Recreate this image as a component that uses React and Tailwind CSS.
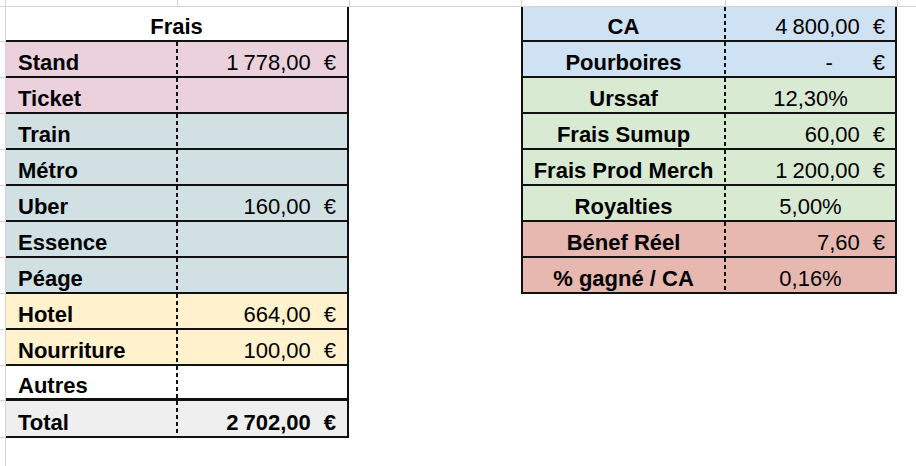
import React from 'react';

// Spreadsheet cost breakdown, two small tables side by side
const fees = [
  { label: 'Stand', value: '1 778,00', bg: 'bg-[#ead1dc]' },
  { label: 'Ticket', value: '', bg: 'bg-[#ead1dc]' },
  { label: 'Train', value: '', bg: 'bg-[#d0e0e3]' },
  { label: 'Métro', value: '', bg: 'bg-[#d0e0e3]' },
  { label: 'Uber', value: '160,00', bg: 'bg-[#d0e0e3]' },
  { label: 'Essence', value: '', bg: 'bg-[#d0e0e3]' },
  { label: 'Péage', value: '', bg: 'bg-[#d0e0e3]' },
  { label: 'Hotel', value: '664,00', bg: 'bg-[#fff2cc]' },
  { label: 'Nourriture', value: '100,00', bg: 'bg-[#fff2cc]' },
];

const summary = [
  { label: 'CA', value: '4 800,00', bg: 'bg-[#cfe2f3]', h: 'h-[35px]' },
  { label: 'Pourboires', value: '-', bg: 'bg-[#cfe2f3]' },
  { label: 'Urssaf', pct: '12,30%', bg: 'bg-[#d9ead3]' },
  { label: 'Frais Sumup', value: '60,00', bg: 'bg-[#d9ead3]' },
  { label: 'Frais Prod Merch', value: '1 200,00', bg: 'bg-[#d9ead3]' },
  { label: 'Royalties', pct: '5,00%', bg: 'bg-[#d9ead3]' },
  { label: 'Bénef Réel', value: '7,60', bg: 'bg-[#e6b8af]' },
  { label: '% gagné / CA', pct: '0,16%', bg: 'bg-[#e6b8af]' },
];

// number with thin gaps between thousands groups
function Num({ text }) {
  const parts = text.split(' ');
  return (
    <span className="flex">
      {parts.map((p, i) => (
        <span key={i} className={i > 0 ? 'ml-[5px]' : ''}>{p}</span>
      ))}
    </span>
  );
}

// accounting style amount: number then euro sign
function Amount({ value }) {
  if (!value) return null;
  return (
    <span className="flex items-end">
      <Num text={value} />
      {value === '-' && <span className="inline-block w-[27px]" />}
      <span className="ml-[13px]">€</span>
    </span>
  );
}

function Dashes() {
  return <div className="w-[2px] self-stretch bg-[image:repeating-linear-gradient(to_bottom,#111_0_4px,transparent_4px_7px)]" />;
}

function Gutter({ h }) {
  return <div className={`w-[6px] border-r border-b border-[#d3d3d3] ${h}`} />;
}

export default function App() {
  return (
    <div className="w-[916px] h-[466px] bg-white overflow-hidden font-['Liberation_Sans',Arial,sans-serif] text-black text-[22px] leading-none">
      {/* top grid strip */}
      <div className="flex h-[7px] border-b border-[#d3d3d3]">
        <div className="w-[6px] border-r border-[#d3d3d3]" />
        <div className="w-[172px] border-r border-[#d3d3d3]" />
        <div className="w-[172px] border-r border-[#d3d3d3]" />
        <div className="w-[172px] border-r border-[#d3d3d3]" />
        <div className="w-[204px] border-r border-[#d3d3d3]" />
        <div className="w-[172px] border-r border-[#d3d3d3]" />
        <div className="flex-1" />
      </div>

      <div className="flex">
        {/* left gutter with gridlines */}
        <div className="flex flex-col w-[6px] h-[459px] border-r border-[#d3d3d3]">
          <Gutter h="h-[35px]" />
          {fees.map((f) => (
            <Gutter key={f.label} h="h-[36px]" />
          ))}
          <Gutter h="h-[35px]" />
          <Gutter h="h-[37px]" />
        </div>

        {/* Frais table */}
        <div className="w-[343px] flex flex-col">
          <div className="h-[35px] flex items-end justify-center pb-[2px] font-bold border-b-2 border-r-2 border-[#111]">
            Frais
          </div>
          {fees.map((f) => (
            <div key={f.label} className={`flex h-[36px] border-b-2 border-r-2 border-[#111] ${f.bg}`}>
              <div className="w-[170px] pl-[12px] pb-[2px] flex items-end font-bold">{f.label}</div>
              <Dashes />
              <div className="flex-1 pr-[11px] pb-[2px] flex items-end justify-end">
                <Amount value={f.value} />
              </div>
            </div>
          ))}
          <div className="flex h-[35px] border-b-[3px] border-r-2 border-[#111]">
            <div className="w-[170px] pl-[12px] pb-[1px] flex items-end font-bold">Autres</div>
            <Dashes />
            <div className="flex-1" />
          </div>
          <div className="flex h-[37px] border-b-2 border-r-2 border-[#111] bg-[#efefef]">
            <div className="w-[170px] pl-[12px] pb-[2px] flex items-end font-bold">Total</div>
            <Dashes />
            <div className="flex-1 pr-[11px] pb-[2px] flex items-end justify-end font-bold">
              <Amount value="2 702,00" />
            </div>
          </div>
        </div>

        <div className="w-[172px]" />

        {/* summary table */}
        <div className="w-[376px] flex flex-col self-start">
          {summary.map((s) => (
            <div
              key={s.label}
              className={`flex ${s.h || 'h-[36px]'} border-b-2 border-x-2 border-[#111] ${s.bg}`}
            >
              <div className="w-[201px] pb-[2px] flex items-end justify-center font-bold whitespace-nowrap">{s.label}</div>
              <Dashes />
              {s.pct ? (
                <div className="flex-1 pb-[2px] flex items-end justify-center">{s.pct}</div>
              ) : (
                <div className="flex-1 pr-[10px] pb-[2px] flex items-end justify-end">
                  <Amount value={s.value} />
                </div>
              )}
            </div>
          ))}
        </div>
      </div>
    </div>
  );
}
